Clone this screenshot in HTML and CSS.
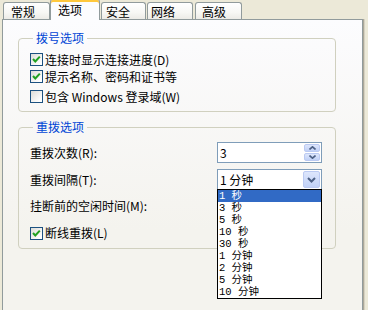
FILE: index.html
```html
<!DOCTYPE html>
<html lang="zh-CN">
<head>
<meta charset="utf-8">
<title>选项</title>
<link rel="stylesheet" href="styles.css">
</head>
<body>
<div class="dialog">
  <div class="tabs">
    <div class="tab">常规</div>
    <div class="tab active">选项</div>
    <div class="tab">安全</div>
    <div class="tab">网络</div>
    <div class="tab">高级</div>
  </div>
  <div class="panel">
    <fieldset class="group group-dial">
      <legend>拨号选项</legend>
      <label class="check-row">
        <span class="checkbox checked"><svg viewBox="0 0 11 11" width="11" height="11"><polyline points="2,5 4.3,7.5 8.8,2.6" fill="none" stroke="#21a121" stroke-width="2"/></svg></span>
        <span>连接时显示连接进度(D)</span>
      </label>
      <label class="check-row">
        <span class="checkbox checked"><svg viewBox="0 0 11 11" width="11" height="11"><polyline points="2,5 4.3,7.5 8.8,2.6" fill="none" stroke="#21a121" stroke-width="2"/></svg></span>
        <span>提示名称、密码和证书等</span>
      </label>
      <label class="check-row gap-top">
        <span class="checkbox"></span>
        <span>包含 Windows 登录域(W)</span>
      </label>
    </fieldset>

    <fieldset class="group group-redial">
      <legend>重拨选项</legend>
      <div class="form-grid">
        <span class="label">重拨次数(R):</span>
        <div class="spin">
          <span class="value">3</span>
          <span class="spin-buttons">
            <span class="spin-btn"><svg viewBox="0 0 7 4" width="7" height="4"><polyline points="0.5,3.5 3.5,0.8 6.5,3.5" fill="none" stroke="#4d6185" stroke-width="1.6"/></svg></span>
            <span class="spin-btn"><svg viewBox="0 0 7 4" width="7" height="4"><polyline points="0.5,0.5 3.5,3.2 6.5,0.5" fill="none" stroke="#4d6185" stroke-width="1.6"/></svg></span>
          </span>
        </div>

        <span class="label">重拨间隔(T):</span>
        <div class="combo">
          <span class="value">1 分钟</span>
          <span class="combo-btn"><svg viewBox="0 0 9 6" width="9" height="6"><polyline points="1,1 4.5,4.5 8,1" fill="none" stroke="#4d6185" stroke-width="2"/></svg></span>
          <ul class="dropdown">
            <li class="selected">1 秒</li>
            <li>3 秒</li>
            <li>5 秒</li>
            <li>10 秒</li>
            <li>30 秒</li>
            <li>1 分钟</li>
            <li>2 分钟</li>
            <li>5 分钟</li>
            <li>10 分钟</li>
          </ul>
        </div>

        <span class="label row-span">挂断前的空闲时间(M):</span>
        <span class="empty"></span>

        <label class="check-row full">
          <span class="checkbox checked"><svg viewBox="0 0 11 11" width="11" height="11"><polyline points="2,5 4.3,7.5 8.8,2.6" fill="none" stroke="#21a121" stroke-width="2"/></svg></span>
          <span>断线重拨(L)</span>
        </label>
      </div>
    </fieldset>
  </div>
</div>
</body>
</html>
```

FILE: styles.css
```css
* { box-sizing: border-box; }

html, body {
  margin: 0;
  padding: 0;
}

body {
  background: #ece9d8;
  font-family: "Noto Sans CJK SC", "Noto Sans", sans-serif;
  font-size: 12px;
  line-height: 14px;
  color: #000;
  width: 368px;
  height: 310px;
  overflow: hidden;
}

.dialog {
  display: flex;
  flex-direction: column;
}

/* Tabs */
.tabs {
  display: flex;
  align-items: flex-end;
  padding-left: 3px;
  height: 20px;
  position: relative;
  z-index: 2;
}

.tab {
  height: 17px;
  border: 1px solid #919b9c;
  border-bottom: none;
  border-radius: 3px 3px 0 0;
  background: linear-gradient(#ffffff, #f7f7f4 60%, #ecebe6);
  padding-left: 6px;
  line-height: 17px;
  margin-bottom: 1px;
}

.tab:nth-child(1) { width: 47px; padding-left: 7px; }
.tab:nth-child(3) { width: 45px; margin-left: 1px; padding-left: 4px; }
.tab:nth-child(4) { width: 46px; margin-left: 1px; padding-left: 3px; }
.tab:nth-child(5) { width: 47px; margin-left: 2px; padding-left: 6px; }

.tab.active {
  width: 50px;
  height: 21px;
  margin-bottom: 0;
  background: #fcfcfe;
  border-top: 1px solid #e68b2c;
  box-shadow: inset 0 2px 0 #ffc83c;
  padding-left: 7px;
  padding-top: 2px;
  line-height: 16px;
}

/* Panel */
.panel {
  margin-left: 2px;
  width: 361px;
  height: 300px;
  margin-top: -1px;
  border: 1px solid #919b9c;
  border-bottom: none;
  box-shadow: 1px 0 0 #aca899, 2px 0 0 #d6d2c2;
  background: linear-gradient(#fcfcfe, #f4f3ee 70%);
  padding: 11px 0 0 15px;
  position: relative;
  z-index: 1;
}

/* Group boxes */
.group {
  margin: 0;
  width: 318px;
  border: 1px solid #d0d0bf;
  border-radius: 4px;
  padding: 6px 0 6px 11px;
  display: flex;
  flex-direction: column;
}

.group legend {
  color: #0046d5;
  padding: 0 3px;
  margin-left: 3px;
  line-height: 14px;
}

.group-redial {
  margin-top: 8px;
  padding-top: 8px;
  padding-bottom: 5px;
}

/* Checkbox rows */
.check-row {
  display: flex;
  align-items: center;
  gap: 2px;
  height: 17px;
}

.check-row.gap-top { margin-top: 3px; }

.checkbox {
  width: 13px;
  height: 13px;
  border: 1px solid #1c5180;
  background: linear-gradient(135deg, #dcdcd7, #ffffff 85%);
  display: flex;
  align-items: center;
  justify-content: center;
  flex: none;
}

/* Redial form */
.form-grid {
  display: grid;
  grid-template-columns: 187px 105px;
  row-gap: 6px;
  align-items: center;
}

.label { line-height: 20px; }

.empty { height: 20px; }

.check-row.full {
  grid-column: 1 / -1;
  height: 20px;
  margin-top: 1px;
}

.spin, .combo {
  height: 21px;
  border: 1px solid #7f9db9;
  background: #fff;
  display: flex;
  align-items: stretch;
  justify-content: space-between;
  position: relative;
}

.value {
  padding-left: 2px;
  line-height: 19px;
}

.spin-buttons {
  display: flex;
  flex-direction: column;
  gap: 1px;
  padding: 1px 1px 1px 0;
}

.spin-btn {
  width: 16px;
  flex: 1;
  border: 1px solid #bbcaf2;
  border-radius: 2px;
  background: linear-gradient(#dde6fc, #c1d1f6);
  display: flex;
  align-items: center;
  justify-content: center;
}

.combo-btn {
  width: 17px;
  margin: 1px 1px 1px 0;
  border: 1px solid #bbcaf2;
  border-radius: 2px;
  background: linear-gradient(#dde6fc, #c1d1f6);
  display: flex;
  align-items: center;
  justify-content: center;
}

/* Dropdown list overlay */
.dropdown {
  position: absolute;
  top: 100%;
  left: -1px;
  width: 105px;
  margin: 0;
  padding: 0;
  list-style: none;
  background: #fff;
  border: 1px solid #000;
  z-index: 5;
}

.dropdown li {
  height: 12px;
  line-height: 12px;
  font-family: "Liberation Mono", "Noto Sans CJK SC", monospace;
  font-size: 10.5px;
  padding-left: 1px;
  white-space: nowrap;
}

.dropdown li.selected {
  background: #316ac5;
  color: #fff;
}
```
